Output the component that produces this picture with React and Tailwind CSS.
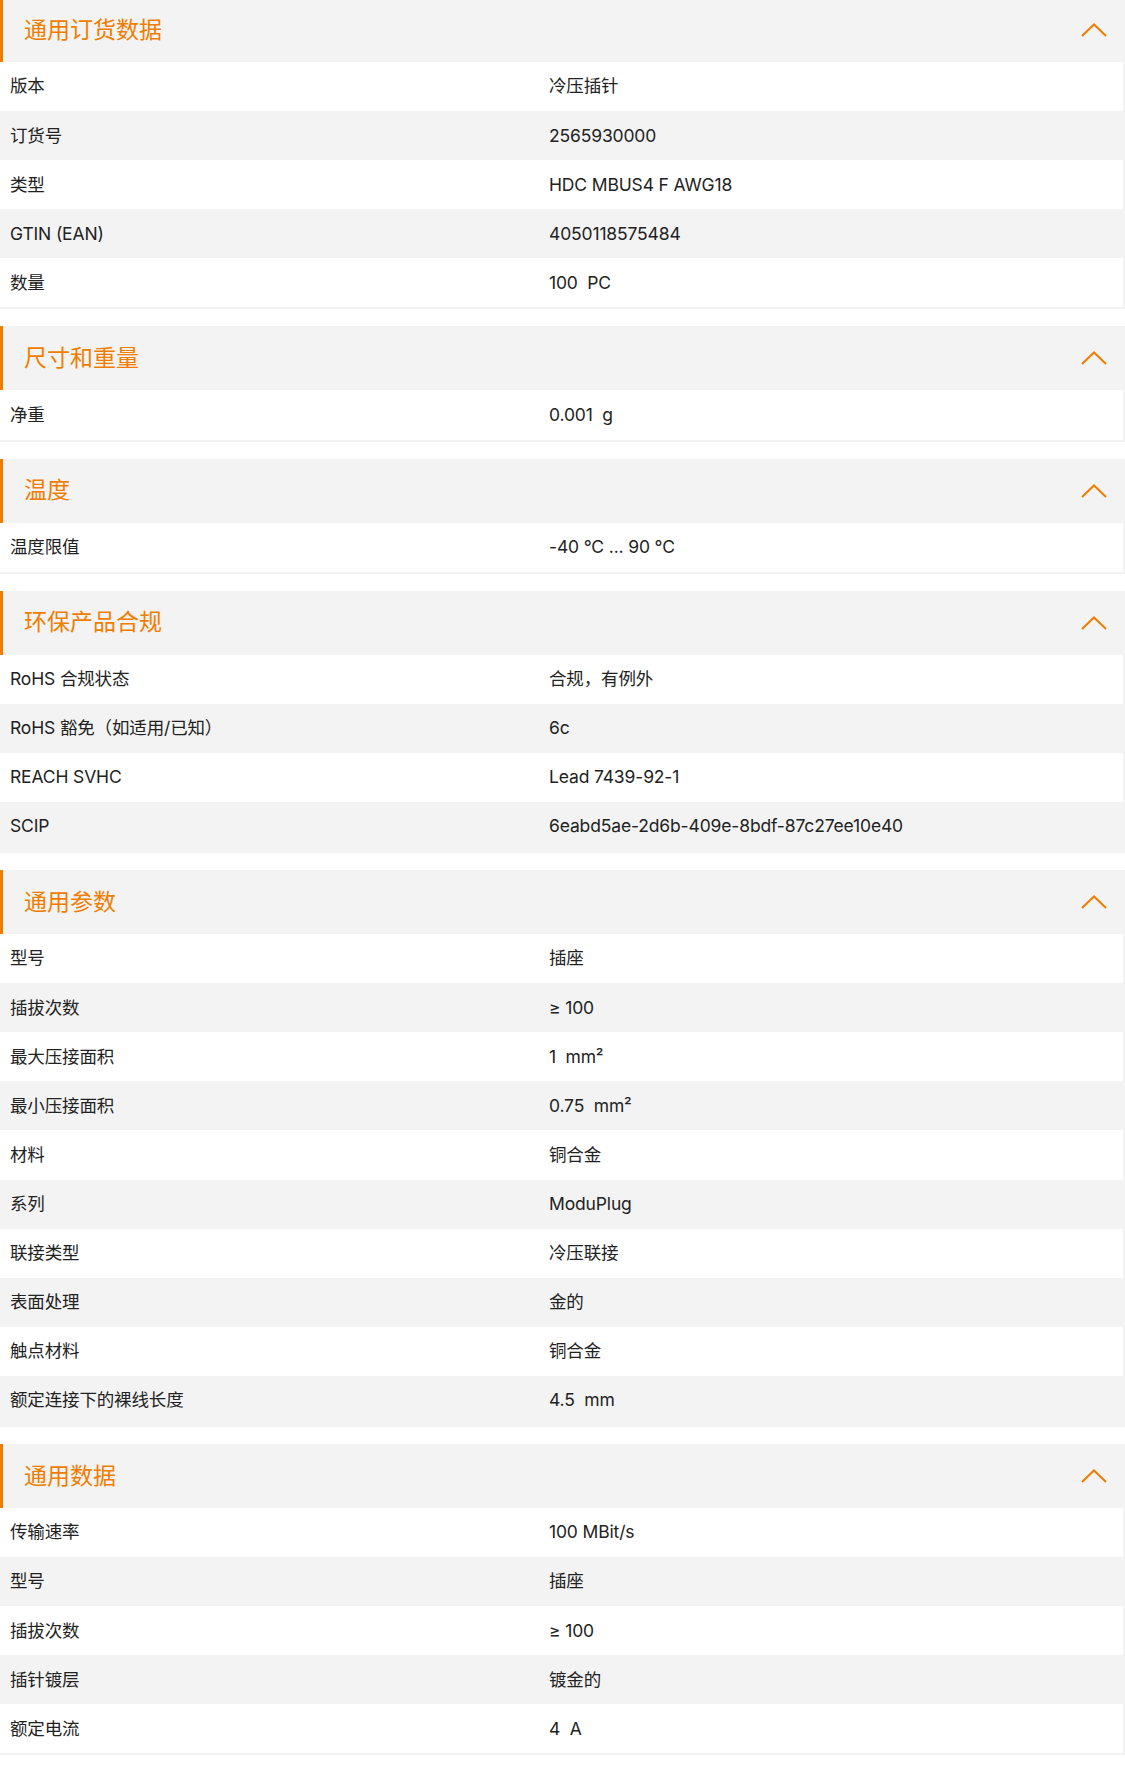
import React from 'react';

const sections = [
  {
    title: '通用订货数据',
    rows: [
      ['版本', '冷压插针'],
      ['订货号', '2565930000'],
      ['类型', 'HDC MBUS4 F AWG18'],
      ['GTIN (EAN)', '4050118575484'],
      ['数量', '100\u00a0\u00a0PC'],
    ],
  },
  {
    title: '尺寸和重量',
    rows: [['净重', '0.001\u00a0\u00a0g']],
  },
  {
    title: '温度',
    rows: [['温度限值', '-40 °C ... 90 °C']],
  },
  {
    title: '环保产品合规',
    rows: [
      ['RoHS 合规状态', '合规，有例外'],
      ['RoHS 豁免（如适用/已知）', '6c'],
      ['REACH SVHC', 'Lead 7439-92-1'],
      ['SCIP', '6eabd5ae-2d6b-409e-8bdf-87c27ee10e40'],
    ],
  },
  {
    title: '通用参数',
    rows: [
      ['型号', '插座'],
      ['插拔次数', '≥ 100'],
      ['最大压接面积', '1\u00a0\u00a0mm²'],
      ['最小压接面积', '0.75\u00a0\u00a0mm²'],
      ['材料', '铜合金'],
      ['系列', 'ModuPlug'],
      ['联接类型', '冷压联接'],
      ['表面处理', '金的'],
      ['触点材料', '铜合金'],
      ['额定连接下的裸线长度', '4.5\u00a0\u00a0mm'],
    ],
  },
  {
    title: '通用数据',
    rows: [
      ['传输速率', '100 MBit/s'],
      ['型号', '插座'],
      ['插拔次数', '≥ 100'],
      ['插针镀层', '镀金的'],
      ['额定电流', '4\u00a0\u00a0A'],
    ],
  },
];

const ChevronUp = () => (
  <svg width="26" height="14" viewBox="0 0 26 14" fill="none" stroke="#f07d00" strokeWidth="2">
    <path d="M1 13 L13 1.5 L25 13" />
  </svg>
);

const Section = ({ title, rows }) => (
  <section className="mb-[17px]">
    <div className="h-16 flex items-center justify-between bg-[#f3f3f3] border-l-[3px] border-[#f07d00] pl-[21px] pr-[18px]">
      <h2 className="text-[23px] text-[#f07d00] font-normal">{title}</h2>
      <ChevronUp />
    </div>
    <div className="border-r-2 border-b-2 border-[#f3f3f3]">
      {rows.map(([label, value], i) => (
        <div
          key={i}
          className={`h-[49.1px] grid grid-cols-[539px_1fr] items-center pl-[10px] text-[17.5px] tracking-[-0.15px] text-[#222] ${i % 2 === 1 ? 'bg-[#f3f3f3]' : 'bg-white'}`}
        >
          <span>{label}</span>
          <span>{value}</span>
        </div>
      ))}
    </div>
  </section>
);

export default function App() {
  return (
    <div
      className="w-[1125px] bg-white -mt-[2px]"
      style={{ fontFamily: 'Inter, "Noto Sans CJK SC", sans-serif' }}
    >
      {sections.map((s) => (
        <Section key={s.title} title={s.title} rows={s.rows} />
      ))}
    </div>
  );
}
